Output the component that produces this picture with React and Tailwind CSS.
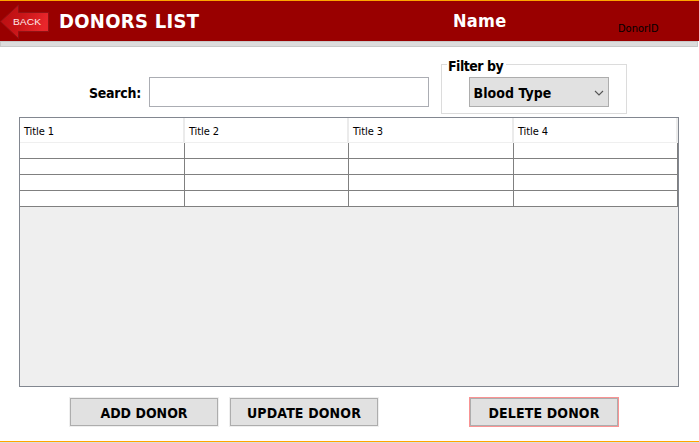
const columns = ['Title 1', 'Title 2', 'Title 3', 'Title 4'];
const rows = [0, 1, 2, 3];

function BackArrow() {
  return (
    <svg width="49" height="36" viewBox="0 0 49 36" className="block" aria-label="Back">
      <defs>
        <linearGradient id="arrow" x1="0" y1="0" x2="1" y2="0.3">
          <stop offset="0" stopColor="#b80d10" />
          <stop offset="0.5" stopColor="#c91518" />
          <stop offset="1" stopColor="#e8262b" />
        </linearGradient>
      </defs>
      <path d="M0.5 17.5 L18.5 1 V8.5 H48.5 V27.5 H18.5 V34.5 Z" fill="url(#arrow)" stroke="#921214" strokeWidth="1" />
      <text x="13" y="20.5" textLength="28" lengthAdjust="spacingAndGlyphs" fontSize="9.5" fontFamily="Liberation Sans, sans-serif" fill="#ffe9e9">
        BACK
      </text>
    </svg>
  );
}

function Button({ children, danger, spacing }) {
  return (
    <button className={`h-[30px] w-[150px] border p-0 ${danger ? 'border-[#f99393]' : 'border-[#efefef]'}`}>
      <span className={`flex h-full items-center justify-center border border-[#adadad] bg-[#e1e1e1] pt-px text-[14px] leading-none font-bold whitespace-nowrap text-black ${spacing}`}>
        {children}
      </span>
    </button>
  );
}

export default function App() {
  return (
    <div className="flex h-[443px] w-[699px] flex-col overflow-hidden bg-white font-['DejaVu_Sans_Condensed','DejaVu_Sans',sans-serif] text-black [font-stretch:condensed]">
      <header className="flex h-[41px] shrink-0 border-t border-[#ffa500] bg-[#990000]">
        <div className="w-[59px] pt-[3px]"><BackArrow /></div>
        <h1 className="w-[394px] pt-[8px] text-[20px] leading-[24px] font-bold tracking-[0.3px] whitespace-nowrap text-white">DONORS LIST</h1>
        <div className="w-[165px] pt-[8px] text-[18px] leading-[24px] font-bold tracking-[0.3px] text-white">Name</div>
        <div className="pt-[21px] text-[11px] leading-[14px] whitespace-nowrap">DonorID</div>
      </header>
      <div className="mr-px h-[6px] shrink-0 border border-[#c8c8c8] bg-[#dcdcdc]" />

      <section className="flex h-[70px] shrink-0">
        <label className="w-[149px] pt-[38px] pl-[89px] text-[14px] leading-[17px] font-bold tracking-[-0.25px] whitespace-nowrap">Search:</label>
        <input className="mt-[30px] h-[30px] w-[280px] border border-[#abadb3] bg-white" />
        <fieldset className="mt-[17px] ml-[12px] h-[50px] w-[186px] border border-[#dcdcdc] pl-[27px]">
          <div className="-mt-[9px] -ml-[22px] h-[21px] w-[59px] bg-white pt-px pl-px text-[14px] leading-[18px] font-bold tracking-[-0.5px] whitespace-nowrap">Filter by</div>
          <button className="flex h-[30px] w-[140px] items-center justify-between border border-[#adadad] bg-[#e1e1e1] pr-[4px] pl-[3.5px] text-[14px] leading-none font-bold tracking-[0.05px]">
            <span className="pt-px whitespace-nowrap">Blood Type</span>
            <svg width="10" height="6" viewBox="0 0 10 6" fill="none" stroke="#555" strokeWidth="1.1" className="mt-px"><path d="M1 1 L5 5 L9 1" /></svg>
          </button>
        </fieldset>
      </section>

      <main className="ml-[19px] h-[270px] w-[660px] shrink-0 border border-[#828790] bg-[#efefef]">
        <div className="grid h-[25px] grid-cols-[165px_164px_165px_164px] border-b border-[#efefef] bg-white">
          {columns.map((title) => (
            <div key={title} className="border-r-2 border-[#ebebeb] pt-[7px] pl-[4px] text-[11px] leading-[14px] tracking-[-0.1px]">{title}</div>
          ))}
        </div>
        {rows.map((row) => (
          <div key={row} className="grid h-[16px] grid-cols-[165px_164px_165px_164px] bg-white">
            {columns.map((title) => (
              <div key={title} className="border-r border-b border-[#808080]" />
            ))}
          </div>
        ))}
      </main>

      <footer className="flex h-[54px] shrink-0 pt-[10px] pl-[69px]">
        <Button spacing="tracking-[0px]">ADD DONOR</Button>
        <div className="ml-[10px]"><Button spacing="tracking-[0.15px]">UPDATE DONOR</Button></div>
        <div className="ml-[90px]"><Button danger spacing="tracking-[0.15px]">DELETE DONOR</Button></div>
      </footer>
      <div className="h-[2px] shrink-0 border-t border-[#ffa500] bg-[#dcdcdc]" />
    </div>
  );
}
